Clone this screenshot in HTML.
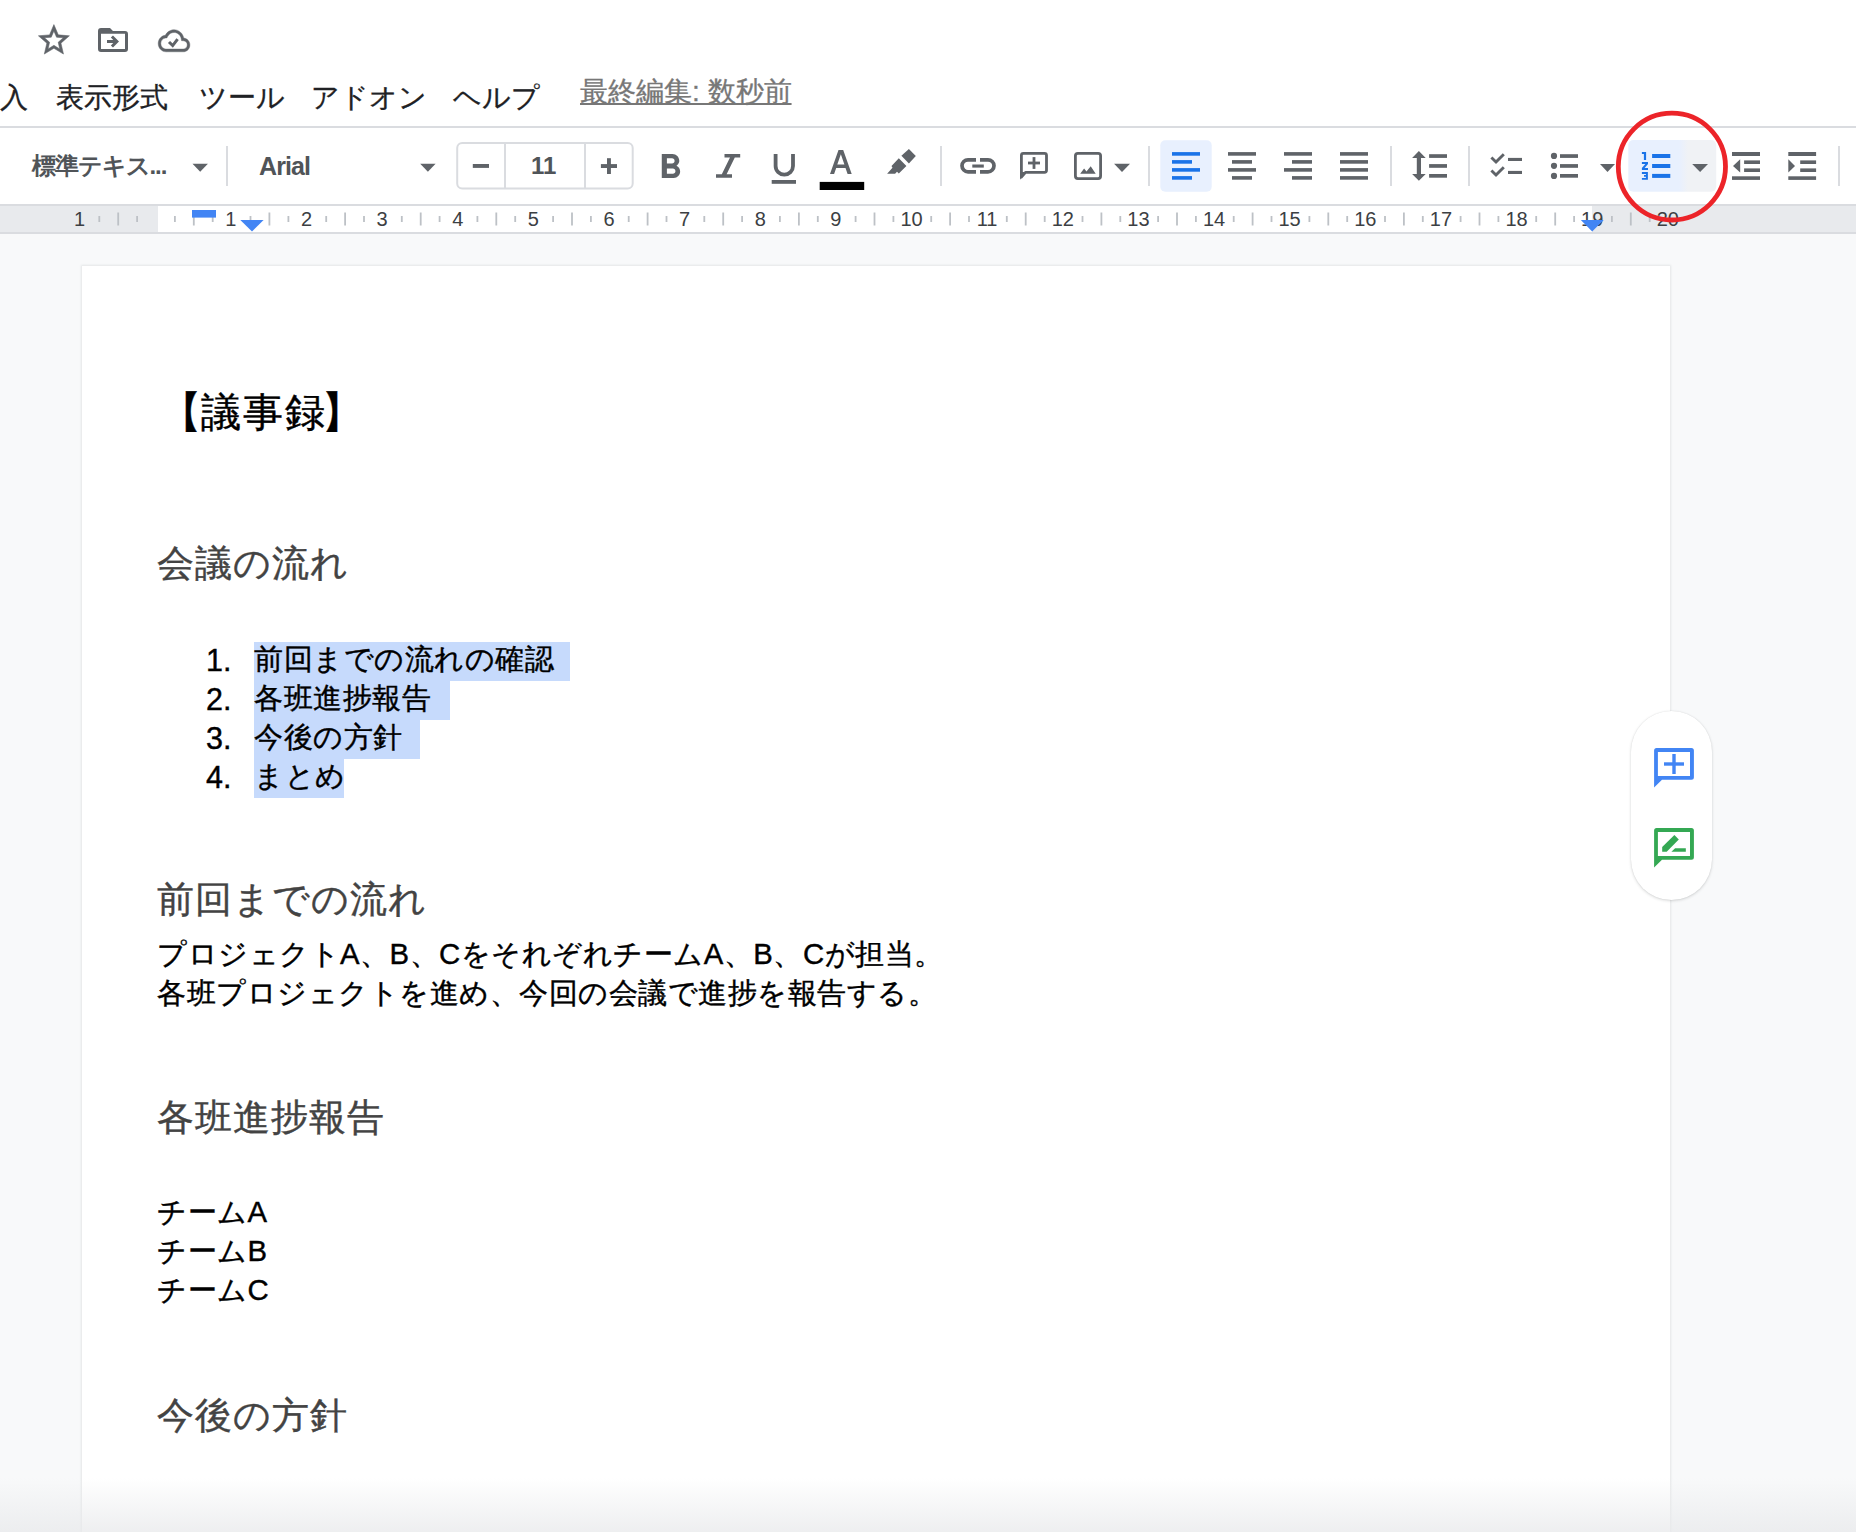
<!DOCTYPE html>
<html><head><meta charset="utf-8">
<style>
html,body{margin:0;padding:0;}
body{width:1856px;height:1532px;overflow:hidden;position:relative;background:#fff;font-family:"Liberation Sans",sans-serif;color:#202124;}
#menu span{position:absolute;top:80px;font-size:28px;line-height:36px;color:#202124;white-space:nowrap;-webkit-text-stroke:0.3px currentColor;}
#hline{position:absolute;left:0;top:126px;width:1856px;height:2px;background:#dadce0;}
#ruler{position:absolute;left:0;top:204px;width:1856px;height:30px;background:#fff;}
#bg{position:absolute;left:0;top:234px;width:1856px;height:1298px;background:#f8f9fa;}
#page{position:absolute;left:82px;top:266px;width:1588px;height:1300px;background:#fff;box-shadow:0 0 2px 1px rgba(60,64,67,.10);}
#fade{position:absolute;left:0;top:1478px;width:1856px;height:54px;background:linear-gradient(to bottom,rgba(240,240,240,0),rgba(232,233,235,.75));}
.doc{position:absolute;white-space:nowrap;-webkit-text-stroke:0.4px currentColor;}
.h{color:#434343;font-size:37.33px;line-height:44px;letter-spacing:1px;}
.t{color:#000;font-size:29.33px;line-height:38.85px;letter-spacing:0.5px;}
.hl{background:#c6dafc;}
.tb{position:absolute;white-space:nowrap;}
.rl{position:absolute;top:208px;font-size:20px;line-height:22px;color:#3c4043;width:40px;text-align:center;}
</style></head>
<body>
<div id="bg"></div>
<div id="page"></div>

<div id="menu">
<span style="left:0">入</span>
<span style="left:56px">表示形式</span>
<span style="left:199px">ツール</span>
<span style="left:311px">アドオン</span>
<span style="left:453px">ヘルプ</span>
<span style="left:580px;top:74px;color:#777;text-decoration:underline;text-decoration-thickness:2px;text-underline-offset:2px">最終編集: 数秒前</span>
</div>
<div id="hline"></div>

<!-- toolbar texts -->
<div class="tb" style="left:32px;top:151.5px;font-size:24px;line-height:28px;color:#505458;font-weight:bold;letter-spacing:-1.1px">標準テキス...</div>
<div class="tb" style="left:259px;top:152px;font-size:25px;line-height:28px;color:#505458;font-weight:bold;letter-spacing:-0.9px">Arial</div>
<div class="tb" style="left:531px;top:152px;font-size:24px;line-height:28px;color:#505458;font-weight:bold">11</div>


<div id="pill" style="position:absolute;left:1631px;top:711px;width:81px;height:188.5px;border-radius:40.5px;background:#fff;box-shadow:0 1px 3px 0 rgba(60,64,67,.2),0 0 1px 0 rgba(60,64,67,.15)"></div>
<div id="fade"></div>

<!-- ICONS SVG -->
<svg id="icons" width="1856" height="1532" style="position:absolute;left:0;top:0">
<rect x="0" y="204" width="1856" height="2" fill="#dadce0"/>
<rect x="0" y="206" width="158" height="26" fill="#e8eaed"/>
<rect x="1592" y="206" width="264" height="26" fill="#e8eaed"/>
<rect x="0" y="232" width="1856" height="2" fill="#dadce0"/>
<rect x="98.4" y="216" width="1.8" height="6" fill="#bdc1c6"/>
<rect x="117.3" y="212.5" width="1.8" height="13" fill="#bdc1c6"/>
<rect x="136.2" y="216" width="1.8" height="6" fill="#bdc1c6"/>
<rect x="174.0" y="216" width="1.8" height="6" fill="#bdc1c6"/>
<rect x="192.9" y="212.5" width="1.8" height="13" fill="#bdc1c6"/>
<rect x="211.8" y="216" width="1.8" height="6" fill="#bdc1c6"/>
<rect x="249.6" y="216" width="1.8" height="6" fill="#bdc1c6"/>
<rect x="268.5" y="212.5" width="1.8" height="13" fill="#bdc1c6"/>
<rect x="287.5" y="216" width="1.8" height="6" fill="#bdc1c6"/>
<rect x="325.3" y="216" width="1.8" height="6" fill="#bdc1c6"/>
<rect x="344.2" y="212.5" width="1.8" height="13" fill="#bdc1c6"/>
<rect x="363.1" y="216" width="1.8" height="6" fill="#bdc1c6"/>
<rect x="400.9" y="216" width="1.8" height="6" fill="#bdc1c6"/>
<rect x="419.8" y="212.5" width="1.8" height="13" fill="#bdc1c6"/>
<rect x="438.7" y="216" width="1.8" height="6" fill="#bdc1c6"/>
<rect x="476.5" y="216" width="1.8" height="6" fill="#bdc1c6"/>
<rect x="495.4" y="212.5" width="1.8" height="13" fill="#bdc1c6"/>
<rect x="514.3" y="216" width="1.8" height="6" fill="#bdc1c6"/>
<rect x="552.2" y="216" width="1.8" height="6" fill="#bdc1c6"/>
<rect x="571.1" y="212.5" width="1.8" height="13" fill="#bdc1c6"/>
<rect x="590.0" y="216" width="1.8" height="6" fill="#bdc1c6"/>
<rect x="627.8" y="216" width="1.8" height="6" fill="#bdc1c6"/>
<rect x="646.7" y="212.5" width="1.8" height="13" fill="#bdc1c6"/>
<rect x="665.6" y="216" width="1.8" height="6" fill="#bdc1c6"/>
<rect x="703.4" y="216" width="1.8" height="6" fill="#bdc1c6"/>
<rect x="722.3" y="212.5" width="1.8" height="13" fill="#bdc1c6"/>
<rect x="741.2" y="216" width="1.8" height="6" fill="#bdc1c6"/>
<rect x="779.0" y="216" width="1.8" height="6" fill="#bdc1c6"/>
<rect x="798.0" y="212.5" width="1.8" height="13" fill="#bdc1c6"/>
<rect x="816.9" y="216" width="1.8" height="6" fill="#bdc1c6"/>
<rect x="854.7" y="216" width="1.8" height="6" fill="#bdc1c6"/>
<rect x="873.6" y="212.5" width="1.8" height="13" fill="#bdc1c6"/>
<rect x="892.5" y="216" width="1.8" height="6" fill="#bdc1c6"/>
<rect x="930.3" y="216" width="1.8" height="6" fill="#bdc1c6"/>
<rect x="949.2" y="212.5" width="1.8" height="13" fill="#bdc1c6"/>
<rect x="968.1" y="216" width="1.8" height="6" fill="#bdc1c6"/>
<rect x="1005.9" y="216" width="1.8" height="6" fill="#bdc1c6"/>
<rect x="1024.8" y="212.5" width="1.8" height="13" fill="#bdc1c6"/>
<rect x="1043.8" y="216" width="1.8" height="6" fill="#bdc1c6"/>
<rect x="1081.6" y="216" width="1.8" height="6" fill="#bdc1c6"/>
<rect x="1100.5" y="212.5" width="1.8" height="13" fill="#bdc1c6"/>
<rect x="1119.4" y="216" width="1.8" height="6" fill="#bdc1c6"/>
<rect x="1157.2" y="216" width="1.8" height="6" fill="#bdc1c6"/>
<rect x="1176.1" y="212.5" width="1.8" height="13" fill="#bdc1c6"/>
<rect x="1195.0" y="216" width="1.8" height="6" fill="#bdc1c6"/>
<rect x="1232.8" y="216" width="1.8" height="6" fill="#bdc1c6"/>
<rect x="1251.7" y="212.5" width="1.8" height="13" fill="#bdc1c6"/>
<rect x="1270.6" y="216" width="1.8" height="6" fill="#bdc1c6"/>
<rect x="1308.5" y="216" width="1.8" height="6" fill="#bdc1c6"/>
<rect x="1327.4" y="212.5" width="1.8" height="13" fill="#bdc1c6"/>
<rect x="1346.3" y="216" width="1.8" height="6" fill="#bdc1c6"/>
<rect x="1384.1" y="216" width="1.8" height="6" fill="#bdc1c6"/>
<rect x="1403.0" y="212.5" width="1.8" height="13" fill="#bdc1c6"/>
<rect x="1421.9" y="216" width="1.8" height="6" fill="#bdc1c6"/>
<rect x="1459.7" y="216" width="1.8" height="6" fill="#bdc1c6"/>
<rect x="1478.6" y="212.5" width="1.8" height="13" fill="#bdc1c6"/>
<rect x="1497.5" y="216" width="1.8" height="6" fill="#bdc1c6"/>
<rect x="1535.3" y="216" width="1.8" height="6" fill="#bdc1c6"/>
<rect x="1554.3" y="212.5" width="1.8" height="13" fill="#bdc1c6"/>
<rect x="1573.2" y="216" width="1.8" height="6" fill="#bdc1c6"/>
<rect x="1611.0" y="216" width="1.8" height="6" fill="#bdc1c6"/>
<rect x="1629.9" y="212.5" width="1.8" height="13" fill="#bdc1c6"/>
<rect x="1648.8" y="216" width="1.8" height="6" fill="#bdc1c6"/>
<text x="79.6" y="226" text-anchor="middle" font-size="20" fill="#3c4043" font-family="Liberation Sans">1</text>
<text x="230.8" y="226" text-anchor="middle" font-size="20" fill="#3c4043" font-family="Liberation Sans">1</text>
<text x="306.5" y="226" text-anchor="middle" font-size="20" fill="#3c4043" font-family="Liberation Sans">2</text>
<text x="382.1" y="226" text-anchor="middle" font-size="20" fill="#3c4043" font-family="Liberation Sans">3</text>
<text x="457.7" y="226" text-anchor="middle" font-size="20" fill="#3c4043" font-family="Liberation Sans">4</text>
<text x="533.3" y="226" text-anchor="middle" font-size="20" fill="#3c4043" font-family="Liberation Sans">5</text>
<text x="609.0" y="226" text-anchor="middle" font-size="20" fill="#3c4043" font-family="Liberation Sans">6</text>
<text x="684.6" y="226" text-anchor="middle" font-size="20" fill="#3c4043" font-family="Liberation Sans">7</text>
<text x="760.2" y="226" text-anchor="middle" font-size="20" fill="#3c4043" font-family="Liberation Sans">8</text>
<text x="835.9" y="226" text-anchor="middle" font-size="20" fill="#3c4043" font-family="Liberation Sans">9</text>
<text x="911.5" y="226" text-anchor="middle" font-size="20" fill="#3c4043" font-family="Liberation Sans">10</text>
<text x="987.1" y="226" text-anchor="middle" font-size="20" fill="#3c4043" font-family="Liberation Sans">11</text>
<text x="1062.8" y="226" text-anchor="middle" font-size="20" fill="#3c4043" font-family="Liberation Sans">12</text>
<text x="1138.4" y="226" text-anchor="middle" font-size="20" fill="#3c4043" font-family="Liberation Sans">13</text>
<text x="1214.0" y="226" text-anchor="middle" font-size="20" fill="#3c4043" font-family="Liberation Sans">14</text>
<text x="1289.6" y="226" text-anchor="middle" font-size="20" fill="#3c4043" font-family="Liberation Sans">15</text>
<text x="1365.3" y="226" text-anchor="middle" font-size="20" fill="#3c4043" font-family="Liberation Sans">16</text>
<text x="1440.9" y="226" text-anchor="middle" font-size="20" fill="#3c4043" font-family="Liberation Sans">17</text>
<text x="1516.5" y="226" text-anchor="middle" font-size="20" fill="#3c4043" font-family="Liberation Sans">18</text>
<text x="1592.2" y="226" text-anchor="middle" font-size="20" fill="#3c4043" font-family="Liberation Sans">19</text>
<text x="1667.8" y="226" text-anchor="middle" font-size="20" fill="#3c4043" font-family="Liberation Sans">20</text>
<rect x="192" y="210" width="24" height="7.6" fill="#4285f4"/>
<path d="M240.3 219.9 H263.6 L252 231.5z" fill="#4285f4"/>
<path d="M1580.8 219.9 H1603.7 L1592.2 231.5z" fill="#4285f4"/>
<g fill="#5f6368">
<!-- star -->
<path transform="translate(35.3,21.5) scale(1.55)" stroke="#5f6368" stroke-width="0.35" stroke-linejoin="round" d="M22 9.24l-7.19-.62L12 2 9.19 8.63 2 9.24l5.46 4.73L5.82 21 12 17.27 18.18 21l-1.63-7.03L22 9.24zM12 15.4l-3.76 2.27 1-4.28-3.32-2.88 4.38-.38L12 6.1l1.71 4.04 4.38.38-3.32 2.88 1 4.28L12 15.4z"/>
<!-- folder move -->
<path fill-rule="evenodd" transform="translate(95,22) scale(1.5)" d="M4 4h6l2 2h8a2 2 0 0 1 2 2v10a2 2 0 0 1-2 2H4a2 2 0 0 1-2-2V6a2 2 0 0 1 2-2zM4 7.8V18h16V7.8z"/>
<path transform="translate(95,22) scale(1.5)" d="M12.16 12H8v2h4.16l-1.59 1.59L11.99 17L16 13l-4.01-4l-1.41 1.41L12.16 12z"/>
<!-- cloud done -->
<path transform="translate(158.2,24.2) scale(1.32,1.38)" stroke="#5f6368" stroke-width="0.3" d="M19.35 10.04C18.67 6.59 15.64 4 12 4 9.11 4 6.6 5.64 5.35 8.04 2.34 8.36 0 10.91 0 14c0 3.31 2.69 6 6 6h13c2.76 0 5-2.24 5-5 0-2.64-2.05-4.78-4.65-4.96zM19 18H6c-2.21 0-4-1.79-4-4 0-2.05 1.53-3.760 3.56-3.97l1.07-.11.5-.95C8.08 7.14 9.94 6 12 6c2.62 0 4.88 1.860 5.39 4.43l.3 1.5 1.53.11c1.56.1 2.78 1.41 2.78 2.96 0 1.65-1.35 3-3 3z"/>
<path d="M169 42L172.7 45.6L177.6 39.2" fill="none" stroke="#5f6368" stroke-width="3"/>

<!-- dropdown triangles -->
<path d="M192.5 163.7H207.9L200.2 171.8z"/>
<path d="M420.2 163.7H435.6L427.9 171.8z"/>
<path d="M1114.1 163.7H1130L1122 172z"/>
<path d="M1600 164.1H1615L1607.5 171.9z"/>
</g>
<!-- separators -->
<g fill="#dadce0">
<rect x="226" y="146" width="2" height="40"/>
<rect x="940" y="146" width="2" height="40"/>
<rect x="1148" y="146" width="2" height="40"/>
<rect x="1390" y="146" width="2" height="40"/>
<rect x="1468" y="146" width="2" height="40"/>
<rect x="1838" y="146" width="2" height="40"/>
</g>
<!-- font size box -->
<rect x="457.2" y="143" width="175.5" height="45.4" rx="5" fill="none" stroke="#dadce0" stroke-width="2"/>
<rect x="504" y="143" width="2" height="45.4" fill="#dadce0"/>
<rect x="584" y="143" width="2" height="45.4" fill="#dadce0"/>
<g fill="#5f6368">
<rect x="472.8" y="164" width="16.2" height="3.9"/>
<rect x="600.9" y="164.1" width="16.1" height="3.9"/>
<rect x="607" y="158.2" width="3.9" height="15.8"/>
<!-- bold -->
<path transform="translate(649.8,147.2) scale(1.71)" d="M15.6 10.79c.97-.67 1.65-1.77 1.65-2.79 0-2.26-1.75-4-4-4H7v14h7.04c2.09 0 3.71-1.7 3.71-3.79 0-1.52-.86-2.82-2.15-3.42zM10 6.5h3c.83 0 1.5.67 1.5 1.5s-.67 1.5-1.5 1.5h-3v-3zm3.5 9H10v-3h3.5c.83 0 1.5.67 1.5 1.5s-.67 1.5-1.5 1.5z"/>
<!-- italic -->
<path d="M724.5 154H740.2V157.5H734.8L726.6 174.3H732V177.8H716V174.3H721.8L730 157.5H724.5z"/>
<!-- underline -->
<path d="M775.6 154V166a8.7 8.7 0 0 0 17.4 0V154" fill="none" stroke="#5f6368" stroke-width="3.8"/>
<rect x="771.7" y="180" width="24.3" height="3.8"/>
<!-- text color A -->
<path d="M838.5 149.9H843.2L851.7 174.1H847.6L845.5 168H836.2L834.1 174.1H830zM837.3 164.6H844.4L840.85 154.2z"/>
<!-- highlighter -->
<path d="M908.9 149L915.8 155.9L908.9 163.4L901.4 155.8z"/>
<path d="M898.8 158.3L906.4 166L898.8 173.4L897 171.7L895.1 173.7H887.1L892.5 167.7L891.5 165.9z"/>
</g>
<rect x="819.7" y="181.9" width="44.5" height="8.1" fill="#000"/>
<g fill="none" stroke="#5f6368">
<!-- link -->
<path d="M976 159.8H968a6 6 0 0 0 0 12H976" stroke-width="3.7"/>
<path d="M980 159.8H988a6 6 0 0 1 0 12H980" stroke-width="3.7"/>
<!-- comment box -->
<path d="M1021.4 177V155.3a2 2 0 0 1 2-2H1044.5a2 2 0 0 1 2 2V170.3a2 2 0 0 1-2 2H1025.5z" stroke-width="2.8" stroke-linejoin="round"/>
<!-- image -->
<rect x="1075.4" y="153.3" width="25.2" height="25.3" rx="2.5" stroke-width="2.8"/>
</g>
<g fill="#5f6368">
<rect x="972.3" y="164.5" width="11.5" height="3.1"/>
<rect x="1028" y="161.6" width="12" height="2.8"/>
<rect x="1032.6" y="157.1" width="2.8" height="11.8"/>
<path d="M1020 172H1026L1020 179.8z"/>
<path d="M1080.2 173.7L1084.1 168.5L1086.5 171.4L1090.7 166.3L1095.7 173.7z"/>
</g>
<!-- align buttons -->
<rect x="1160.3" y="140.3" width="51.4" height="51.4" rx="5" fill="#e8f0fe"/>
<g fill="#1a73e8">
<rect x="1172" y="152.1" width="28" height="3.6"/>
<rect x="1172" y="160.1" width="20" height="3.6"/>
<rect x="1172" y="168.1" width="28" height="3.6"/>
<rect x="1172" y="176.1" width="20" height="3.6"/>
</g>
<g fill="#5f6368">
<rect x="1228" y="152.1" width="28" height="3.6"/>
<rect x="1232" y="160.1" width="20" height="3.6"/>
<rect x="1228" y="168.1" width="28" height="3.6"/>
<rect x="1232" y="176.1" width="20" height="3.6"/>
<rect x="1284" y="152.1" width="28" height="3.6"/>
<rect x="1292" y="160.1" width="20" height="3.6"/>
<rect x="1284" y="168.1" width="28" height="3.6"/>
<rect x="1292" y="176.1" width="20" height="3.6"/>
<rect x="1340" y="152.1" width="28" height="3.6"/>
<rect x="1340" y="160.1" width="28" height="3.6"/>
<rect x="1340" y="168.1" width="28" height="3.6"/>
<rect x="1340" y="176.1" width="28" height="3.6"/>
<!-- line spacing -->
<path d="M1418.9 151.1L1425.7 157.9H1421V173.9H1425.7L1418.9 180.8L1412.1 173.9H1416.8V157.9H1412.1z"/>
<rect x="1429.1" y="154.2" width="17.9" height="3.7"/>
<rect x="1429.1" y="164.1" width="17.9" height="3.7"/>
<rect x="1429.1" y="174" width="17.9" height="3.7"/>
<!-- checklist bars -->
<rect x="1508" y="157.9" width="14" height="3.1"/>
<rect x="1508" y="170.9" width="14" height="3.1"/>
<!-- bullets -->
<circle cx="1554" cy="155.9" r="3.1"/>
<circle cx="1554" cy="165.8" r="3.1"/>
<circle cx="1554" cy="175.9" r="3.1"/>
<rect x="1560" y="154.2" width="18" height="3.7"/>
<rect x="1560" y="164.1" width="18" height="3.7"/>
<rect x="1560" y="174" width="18" height="3.7"/>
</g>
<g fill="none" stroke="#5f6368" stroke-width="2.9">
<path d="M1491.4 157.5L1496 162L1503.8 154.2"/>
<path d="M1491.4 170.5L1496 175L1503.8 167.2"/>
</g>
<!-- numbered list button -->
<defs><linearGradient id="nbg" x1="0" y1="0" x2="1" y2="0"><stop offset="0.58" stop-color="#e8f0fe"/><stop offset="0.68" stop-color="#f0f2f5"/></linearGradient></defs>
<rect x="1628.3" y="140.1" width="87.9" height="51.6" rx="5" fill="url(#nbg)"/>
<g fill="#1a73e8">
<rect x="1652.1" y="154" width="18.2" height="4"/>
<rect x="1652.1" y="164" width="18.2" height="4"/>
<rect x="1652.1" y="173.9" width="18.2" height="4"/>
<path d="M1641.9 152H1646.1V160H1643.9V153.9H1641.9z"/>
<path d="M1641.9 162.1H1648V164L1644.6 168.1H1648V170H1641.9V168.1L1645.3 164H1641.9z"/>
<path d="M1641.9 172.1H1647.9V179.8H1641.9V178.1H1645.9V176.8H1644V175H1645.9V173.9H1641.9z"/>
</g>
<g fill="#5f6368">
<path d="M1692.2 164H1708L1700.1 171.9z"/>
<!-- decrease indent -->
<rect x="1732" y="152" width="28" height="4"/>
<rect x="1744.1" y="160.4" width="15.9" height="3.6"/>
<rect x="1744.1" y="168.4" width="15.9" height="3.6"/>
<rect x="1732" y="176.3" width="28" height="3.6"/>
<path d="M1740.2 159.3V172.6L1733 166z"/>
<!-- increase indent -->
<rect x="1788.3" y="152" width="27.8" height="4"/>
<rect x="1800.2" y="160.4" width="15.9" height="3.6"/>
<rect x="1800.2" y="168.4" width="15.9" height="3.6"/>
<rect x="1788.3" y="176.3" width="27.8" height="3.6"/>
<path d="M1788.3 159.3V172.6L1795 166z"/>
</g>
<!-- side panel -->
<g fill="#4285f4">
<path fill-rule="evenodd" d="M1656.6 747.9H1691.4a2.5 2.5 0 0 1 2.5 2.5V777.2a2.5 2.5 0 0 1-2.5 2.5H1662L1654.1 787.6V750.4a2.5 2.5 0 0 1 2.5-2.5zM1657.9 751.9V776H1690V751.9z"/>
<rect x="1664" y="762.3" width="20" height="3.4"/>
<rect x="1672.3" y="754" width="3.4" height="20"/>
</g>
<g fill="#34a853">
<path fill-rule="evenodd" d="M1656.6 827.9H1691.4a2.5 2.5 0 0 1 2.5 2.5V857.2a2.5 2.5 0 0 1-2.5 2.5H1662L1654.1 867.6V830.4a2.5 2.5 0 0 1 2.5-2.5zM1657.9 831.9V856H1690V831.9z"/>
<path d="M1662.2 846.9L1674.4 835L1678.8 839.4L1666.7 851.7H1662.2z"/>
<path d="M1671.4 851.7L1675.1 848.2H1685.8V851.7z"/>
</g>
<!-- red circle -->
<ellipse cx="1671.9" cy="166.6" rx="53.6" ry="53.4" fill="none" stroke="#ec2429" stroke-width="4.8"/>

</svg>

<div class="doc" style="left:159.3px;top:386px;font-size:42.67px;line-height:52px;color:#000">【</div>
<div class="doc" style="left:201px;top:388px;font-size:40px;line-height:48px;letter-spacing:1.75px;color:#000">議事録</div>
<div class="doc" style="left:321px;top:386px;font-size:42.67px;line-height:52px;color:#000">】</div>
<div class="doc h" style="left:157px;top:541px">会議の流れ</div>
<div class="doc t" style="left:206px;top:640.90px;font-size:30.5px;letter-spacing:0">1.</div>
<div class="doc t" style="left:206px;top:679.83px;font-size:30.5px;letter-spacing:0">2.</div>
<div class="doc t" style="left:206px;top:718.76px;font-size:30.5px;letter-spacing:0">3.</div>
<div class="doc t" style="left:206px;top:757.69px;font-size:30.5px;letter-spacing:0">4.</div>
<div class="doc hl" style="left:254px;top:641.90px;width:316px;height:38.93px"></div>
<div class="doc hl" style="left:254px;top:680.83px;width:196px;height:38.93px"></div>
<div class="doc hl" style="left:254px;top:719.76px;width:166px;height:38.93px"></div>
<div class="doc hl" style="left:254px;top:758.69px;width:90px;height:38.93px"></div>
<div class="doc t" style="left:254px;top:640.40px">前回までの流れの確認</div>
<div class="doc t" style="left:254px;top:679.33px">各班進捗報告</div>
<div class="doc t" style="left:254px;top:718.26px">今後の方針</div>
<div class="doc t" style="left:254px;top:757.19px">まとめ</div>
<div class="doc h" style="left:157px;top:877px">前回までの流れ</div>
<div class="doc t" style="left:157px;top:935px">プロジェクトA、B、CをそれぞれチームA、B、Cが担当。</div>
<div class="doc t" style="left:157px;top:974px">各班プロジェクトを進め、今回の会議で進捗を報告する。</div>
<div class="doc h" style="left:157px;top:1095px">各班進捗報告</div>
<div class="doc t" style="left:157px;top:1193px">チームA</div>
<div class="doc t" style="left:157px;top:1232px">チームB</div>
<div class="doc t" style="left:157px;top:1271px">チームC</div>
<div class="doc h" style="left:157px;top:1393px">今後の方針</div>
</body></html>
